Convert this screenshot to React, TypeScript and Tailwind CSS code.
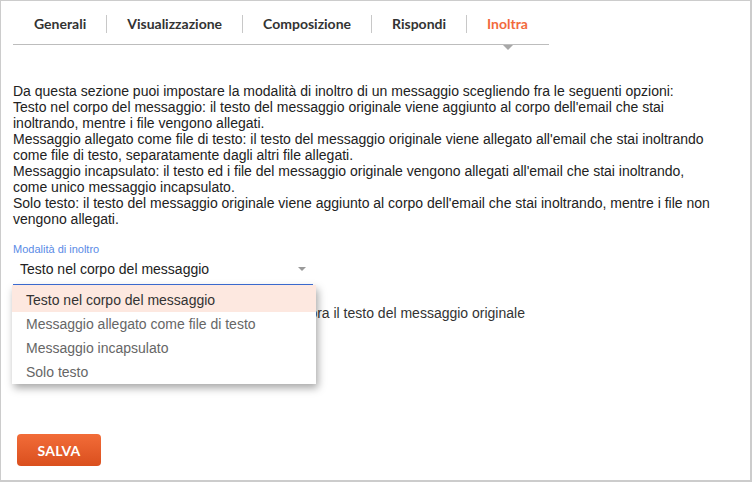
import React from 'react';

const tabs = ['Generali', 'Visualizzazione', 'Composizione', 'Rispondi', 'Inoltra'];

const options = [
  'Testo nel corpo del messaggio',
  'Messaggio allegato come file di testo',
  'Messaggio incapsulato',
  'Solo testo',
];

export default function App() {
  return (
    <div className="w-[752px] h-[482px] bg-white border border-r-2 border-b-2 border-[#cccccc] font-['Liberation_Sans',Arial,sans-serif] text-[#222]">
      {/* tabs */}
      <div className="ml-[12px] w-[536px] flex pt-[14px] pb-[11px] border-b border-[#bdbdbd] font-['Lato',sans-serif] font-bold text-[14px] text-[#333]">
        {tabs.map((t, i) => (
          <div
            key={t}
            className={
              'relative h-[18px] leading-[18px] ' +
              (i === 0 ? 'pl-[21px] pr-5' : 'px-5 border-l border-[#c8c8c8]') +
              (t === 'Inoltra' ? ' text-[#f26a3c]' : '')
            }
          >
            {t}
            {t === 'Inoltra' && (
              <span className="absolute left-1/2 -translate-x-1/2 top-[30px] w-0 h-0 border-l-[5px] border-r-[5px] border-t-[5px] border-l-transparent border-r-transparent border-t-[#a8a8a8]" />
            )}
          </div>
        ))}
      </div>

      <div className="ml-[12px]">
        <p className="mt-[38px] w-[703px] text-[14px] leading-4">
          Da questa sezione puoi impostare la modalità di inoltro di un messaggio scegliendo fra le seguenti opzioni:
          <br />
          Testo nel corpo del messaggio: il testo del messaggio originale viene aggiunto al corpo dell'email che stai inoltrando, mentre i file vengono allegati.
          <br />
          Messaggio allegato come file di testo: il testo del messaggio originale viene allegato all'email che stai inoltrando come file di testo, separatamente dagli altri file allegati.
          <br />
          Messaggio incapsulato: il testo ed i file del messaggio originale vengono allegati all'email che stai inoltrando, come unico messaggio incapsulato.
          <br />
          Solo testo: il testo del messaggio originale viene aggiunto al corpo dell'email che stai inoltrando, mentre i file non vengono allegati.
        </p>

        <div className="mt-4 text-[11px] leading-[13px] text-[#5a8be6]">Modalità di inoltro</div>
        <div className="relative w-[300px]">
          <div className="flex items-center justify-between pl-[7px] pr-[7px] pt-[5px] pb-[7px] border-b border-[#3d6fd8] text-[14px] leading-4 text-[#222]">
            <span>Testo nel corpo del messaggio</span>
            <span className="w-0 h-0 border-l-[4px] border-r-[4px] border-t-[4px] border-l-transparent border-r-transparent border-t-[#9a9a9a]" />
          </div>
          <div className="absolute z-10 left-[-1px] top-full w-[304px] bg-white shadow-[2px_4px_8px_rgba(0,0,0,0.35)] text-[14px]">
            {options.map((o, i) => (
              <div
                key={o}
                className={
                  i === 0
                    ? 'h-[27px] pt-[3px] leading-6 pl-[14px] bg-[#fde8e0] text-[#333]'
                    : 'h-6 leading-6 pl-[14px] text-[#666]'
                }
              >
                {o}
              </div>
            ))}
          </div>
        </div>

        <label className="mt-[20px] flex items-center gap-2 text-[14px] leading-4 text-[#333]">
          <input type="checkbox" className="w-4 h-4" />
          <span>Quando inoltri un messaggio in linea, incorpora il testo del messaggio originale</span>
        </label>

        <button className="mt-[113px] ml-[4px] w-[84px] h-[32px] rounded-[4px] bg-gradient-to-b from-[#f26c38] to-[#da4f1d] text-white font-['Lato',sans-serif] font-bold text-[14px] tracking-[0.2px]">
          SALVA
        </button>
      </div>
    </div>
  );
}
